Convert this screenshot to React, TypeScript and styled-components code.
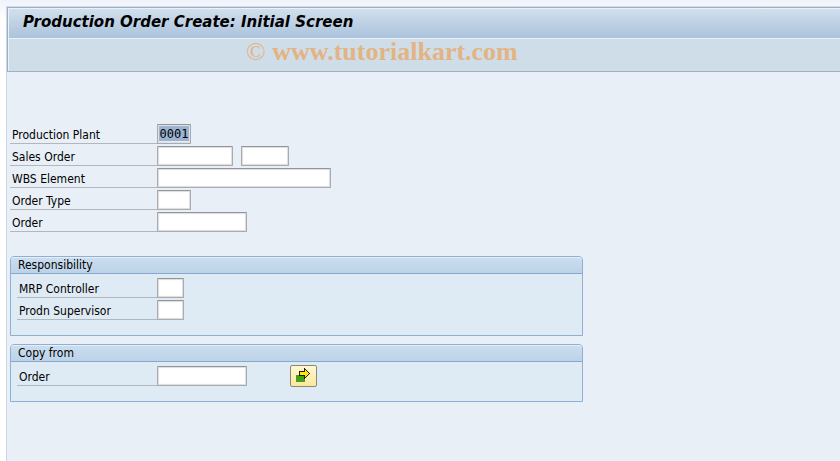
import React from "react";
import styled, { createGlobalStyle } from "styled-components";

const GlobalStyle = createGlobalStyle`
  * { box-sizing: border-box; }
  body {
    margin: 0;
    background: #fff;
    color: #000;
    font: 12px/16px "DejaVu Sans Condensed", "DejaVu Sans", "Noto Sans", sans-serif;
  }
`;

const Page = styled.div`
  display: flex;
  flex-direction: column;
  min-height: 100vh;
  padding: 6px 0 0 6px;
  background: linear-gradient(#eff3fa, #fff 20px);
`;

const Screen = styled.main`
  flex: 1;
  border-left: 1px solid #ccd6e4;
  border-top: 1px solid #d3dae8;
  background: #e8eff6;
`;

const Header = styled.header`
  border: 1px solid #9db0c8;
  border-right: 0;
  background: #cfdde8;
`;

const TitleBar = styled.div`
  height: 31px;
  padding: 4px 14px;
  border: 1px solid #eaf1f7;
  border-right: 0;
  background: linear-gradient(#d0dfec, #abc3dc);
`;

const Title = styled.h1`
  margin: 0;
  font-family: "DejaVu Sans", sans-serif;
  font-size: 15px;
  line-height: 18px;
  font-weight: bold;
  font-style: italic;
  white-space: nowrap;
`;

const ToolBar = styled.div`
  height: 32px;
  padding-left: 237px;
  border-left: 1px solid #eaf1f7;
`;

const Watermark = styled.span`
  color: #e3b483;
  font: bold 26px/26px "Liberation Serif", serif;
  white-space: nowrap;
`;

const Copyright = styled.span`
  font-weight: normal;
`;

const Content = styled.form`
  display: flex;
  flex-direction: column;
  gap: 8px;
  max-width: 576px;
  padding: 52px 0 0 3px;
`;

const Rows = styled.div`
  display: flex;
  flex-direction: column;
  gap: 2px;
`;

const TopRows = styled(Rows)`
  margin-bottom: 16px;
`;

const Row = styled.div`
  display: flex;
  height: 20px;
`;

const Label = styled.label<{ $inset?: boolean }>`
  width: ${(p) => (p.$inset ? 140 : 147)}px;
  padding: 3px 0 0 2px;
  border-bottom: 1px solid #b3b7ba;
  white-space: nowrap;
`;

const Field = styled.input<{ $width: number }>`
  width: ${(p) => p.$width}px;
  height: 20px;
  margin: 0 8px 0 0;
  padding: 0 2px;
  border: 1px solid #a9abae;
  border-top-color: #939598;
  border-radius: 1px;
  outline: 0;
  background: #fff;
  box-shadow: inset 0 0 1px 1px #dcdde0;
  color: #000;
  font: 12px/16px "DejaVu Sans Mono", monospace;
`;

const SelectedField = styled(Field)`
  padding: 1px 1px 2px;
  background-color: #fff;
  background-image: linear-gradient(#9ab3d3, #9ab3d3);
  background-clip: content-box;
  background-origin: content-box;
  text-align: center;
`;

const Group = styled.fieldset<{ $bottom: number }>`
  display: flex;
  flex-direction: column;
  min-width: 0;
  margin: 0;
  padding: 0 0 ${(p) => p.$bottom}px;
  border: 1px solid #8fb0d2;
  border-radius: 4px 4px 0 0;
  background: #deeaf4;
`;

const GroupTitle = styled.h2`
  height: 17px;
  margin: 0 0 4px;
  padding-left: 7px;
  border-top: 1px solid #e6eff7;
  border-bottom: 1px solid #86a8cc;
  border-radius: 3px 3px 0 0;
  background: linear-gradient(#cbdded, #bcd3e8);
  font-size: 12px;
  line-height: 15px;
  font-weight: normal;
`;

const GroupRows = styled(Rows)`
  padding-left: 6px;
`;

const CopyButton = styled.button`
  display: flex;
  align-items: center;
  justify-content: center;
  width: 27px;
  height: 22px;
  margin: -1px 0 -1px 35px;
  padding: 0;
  border: 1px solid #8b8878;
  border-radius: 2px;
  background: linear-gradient(#fff8d2, #fbe89c);
`;

interface RowProps {
  id: string;
  label: string;
  width: number;
  inset?: boolean;
  children?: React.ReactNode;
}

function FieldRow({ id, label, width, inset, children }: RowProps) {
  return (
    <Row>
      <Label htmlFor={id} $inset={inset}>{label}</Label>
      <Field id={id} $width={width} />
      {children}
    </Row>
  );
}

function CopyIcon() {
  return (
    <svg width="15" height="16" viewBox="0 0 15 16" shapeRendering="crispEdges" aria-hidden="true">
      <rect x="0" y="7" width="9" height="7" fill="#45a018" />
      <path d="M3 3h5V0h1v1h1v1h1v1h1v1h1v1h1v1h-1v1h-1v1h-1v1h-1v1H9v1H8V8H3z" fill="#1c1c00" />
      <path d="M4 4h5V2h1v1h1v1h1v1h1v1h-1v1h-1v1h-1v1H9V7H4z" fill="#ffe900" />
    </svg>
  );
}

export default function App() {
  return (
    <>
      <GlobalStyle />
      <Page>
        <Screen>
          <Header>
            <TitleBar>
              <Title>Production Order Create: Initial Screen</Title>
            </TitleBar>
            <ToolBar>
              <Watermark><Copyright>©</Copyright> www.tutorialkart.com</Watermark>
            </ToolBar>
          </Header>
          <Content>
            <TopRows>
              <Row>
                <Label htmlFor="plant">Production Plant</Label>
                <SelectedField id="plant" $width={34} defaultValue="0001" />
              </Row>
              <FieldRow id="sales" label="Sales Order" width={76}>
                <Field $width={48} aria-label="Sales order item" />
              </FieldRow>
              <FieldRow id="wbs" label="WBS Element" width={174} />
              <FieldRow id="type" label="Order Type" width={34} />
              <FieldRow id="order" label="Order" width={90} />
            </TopRows>
            <Group $bottom={15} aria-labelledby="responsibility">
              <GroupTitle id="responsibility">Responsibility</GroupTitle>
              <GroupRows>
                <FieldRow id="mrp" label="MRP Controller" width={27} inset />
                <FieldRow id="supervisor" label="Prodn Supervisor" width={27} inset />
              </GroupRows>
            </Group>
            <Group $bottom={15} aria-labelledby="copy">
              <GroupTitle id="copy">Copy from</GroupTitle>
              <GroupRows>
                <FieldRow id="source" label="Order" width={90} inset>
                  <CopyButton type="button" aria-label="Copy from order"><CopyIcon /></CopyButton>
                </FieldRow>
              </GroupRows>
            </Group>
          </Content>
        </Screen>
      </Page>
    </>
  );
}
